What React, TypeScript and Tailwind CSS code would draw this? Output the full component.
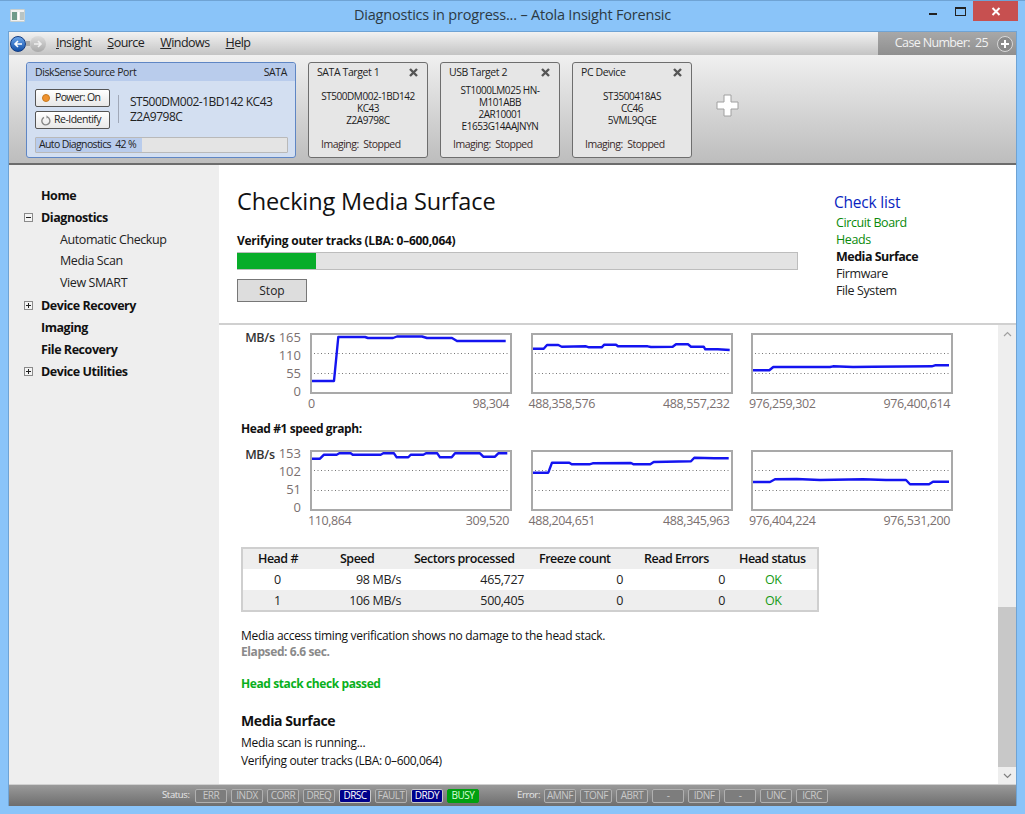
import React from "react";
const font = { fontFamily: '"Open Sans","Noto Sans",sans-serif' };

function Chart({ labels, pts }: { labels: [string, string]; pts: string }) {
  return (
    <div className="flex w-[202px] flex-col">
      <div className="relative h-[61px] w-[202px] border-2 border-[#a9a9a9] bg-white">
        <svg width="198" height="57" className="absolute left-0 top-0">
          <line x1="2" x2="198" y1="18.5" y2="18.5" stroke="#777" strokeDasharray="1 2.5" />
          <line x1="2" x2="198" y1="38.5" y2="38.5" stroke="#777" strokeDasharray="1 2.5" />
          <polyline points={pts} fill="none" stroke="#1414f0" strokeWidth="2.4" strokeLinejoin="round" />
        </svg>
      </div>
      <div className="-ml-[2px] mt-[1px] flex justify-between pr-[3px] text-[12.5px] leading-[17px] tracking-[-0.4px] text-[#7a7070]">
        <span>{labels[0]}</span>
        <span>{labels[1]}</span>
      </div>
    </div>
  );
}

function YAxis({ v, top, mb }: { v: string[]; top: string; mb: string }) {
  return (
    <div className={"flex w-[69px] shrink-0 justify-end " + top}>
      <div className={"mr-[4px] text-[12.5px] font-semibold leading-[17px] tracking-[-0.3px] text-[#333] " + mb}>MB/s</div>
      <div className="mr-[9px] flex flex-col text-right text-[13px] leading-[18px] text-[#7a7070]">
        {v.map((x) => <span key={x}>{x}</span>)}
      </div>
    </div>
  );
}

function Target({ title, lines, mt }: { title: string; lines: string[]; mt: string }) {
  return (
    <div className="flex h-[96px] w-[120px] flex-col rounded-[3px] border border-[#6e6e6e] bg-[#e6e6e6] px-2 text-[10.5px] leading-[12px] tracking-[-0.4px] text-[#1a1a1a]">
      <div className="mt-[3px] flex items-center justify-between pr-[1px]">
        <span className="text-[#222]">{title}</span>
        <svg width="9" height="9" viewBox="0 0 9 9"><path d="M1 1 8 8M8 1 1 8" stroke="#555" strokeWidth="2.4" /></svg>
      </div>
      <div className={"flex flex-col items-center whitespace-nowrap text-center text-[10px] tracking-[-0.45px] " + mt}>
        {lines.map((l) => <span key={l}>{l}</span>)}
      </div>
      <div className="mb-[7px] mt-auto pl-[4px] tracking-[-0.5px] text-[#3a2a2a]">Imaging:&nbsp; Stopped</div>
    </div>
  );
}

function NavTop({ t, icon }: { t: string; icon?: "plus" | "minus" }) {
  return (
    <div className="relative flex h-[22px] items-center pl-[32px] text-[12.5px] font-bold tracking-[-0.45px] text-[#111]">
      {icon && (
        <span className="absolute left-[15px] top-[6px] flex h-[9px] w-[9px] items-center justify-center border border-[#8a8a8a] bg-[#f4f4f4]">
          <span className="relative block h-[1px] w-[5px] bg-[#222]">
            {icon === "plus" && <span className="absolute left-[2px] top-[-2px] block h-[5px] w-[1px] bg-[#222]" />}
          </span>
        </span>
      )}
      {t}
    </div>
  );
}

function Pill({ t, v = "off" }: { t: string; v?: "off" | "blue" | "green" }) {
  const cls = v === "blue" ? "bg-[#00008b] text-white border-[#c8c8c8]" : v === "green" ? "bg-[#00a010] text-[#d8ffd8] border-[#00a010]" : "bg-[#7d7d7d] text-[#c9c9c9] border-[#b0b0b0]";
  return <span className={"flex h-[14px] w-[32px] shrink-0 items-center justify-center rounded-[2px] border text-[10px] tracking-[-0.5px] " + cls}>{t}</span>;
}

const cols = "grid-cols-[57px_102px_122px_99px_102px_1fr]";

export default function App() {
  return (
    <div style={font} className="flex h-[814px] w-[1025px] flex-col overflow-hidden border-t border-[#6fa3d4] bg-[#8ac4f9] text-[#111]">
      {/* title bar */}
      <div className="relative flex h-[30px] shrink-0 items-center justify-center pb-[2px] text-[14.5px] tracking-[-0.2px] text-[#2c3a44]">
        <div className="absolute left-[10px] top-[8px] flex h-[13px] w-[15px] items-center justify-center gap-[1px] rounded-[1px] border border-[#c8d0d0] bg-[#f0f0f0]">
          <span className="h-[8px] w-[5px] bg-[#6f9a8a]" />
          <span className="h-[8px] w-[1px] bg-white" />
          <span className="h-[8px] w-[4px] bg-[#b8c4c4]" />
        </div>
        <span>Diagnostics in progress... – Atola Insight Forensic</span>
        <div className="absolute right-[7px] top-0 flex h-[20px] items-start">
          <span className="mr-[18px] mt-[12px] h-[2px] w-[8px] bg-[#222]" />
          <span className="mr-[7px] mt-[6px] h-[9px] w-[11px] border border-t-2 border-[#222]" />
          <span className="flex h-[20px] w-[45px] items-center justify-center bg-[#c75050]">
            <svg width="10" height="9" viewBox="0 0 10 9"><path d="M1.5 1 8.5 8M8.5 1 1.5 8" stroke="#fff" strokeWidth="2" /></svg>
          </span>
        </div>
      </div>
      <div className="flex min-h-0 flex-1 flex-col px-[8px] pb-[8px]">
        <div className="flex h-full min-h-0 flex-col border-l border-r border-t border-[#6fa3d4]">
          {/* menu */}
          <div className="flex h-[23px] shrink-0 items-stretch bg-gradient-to-b from-[#f2f2f2] to-[#c4c4c4] text-[12.5px] tracking-[-0.55px] text-[#222]">
            <div className="flex flex-1 items-center">
              <div className="ml-[1px] flex items-center">
                <span className="z-10 flex h-[16px] w-[16px] items-center justify-center rounded-full border border-[#123a80] bg-gradient-to-b from-[#6aa5ea] to-[#0f4fa8]">
                  <svg width="10" height="10" viewBox="0 0 10 10"><path d="M9 5H2M5 2 2 5l3 3" fill="none" stroke="#fff" strokeWidth="1.6" /></svg>
                </span>
                <span className="h-[5px] w-[4px] bg-[#a9a9a9]" />
                <span className="flex h-[16px] w-[16px] items-center justify-center rounded-full bg-gradient-to-b from-[#ddd] to-[#a9a9a9]">
                  <svg width="10" height="10" viewBox="0 0 10 10"><path d="M1 5h7M5 2l3 3-3 3" fill="none" stroke="#f0f0f0" strokeWidth="1.6" /></svg>
                </span>
              </div>
              <div className="ml-[10px] flex gap-[16px]">
                <span><u>I</u>nsight</span>
                <span><u>S</u>ource</span>
                <span><u>W</u>indows</span>
                <span><u>H</u>elp</span>
              </div>
            </div>
            <div className="flex w-[138px] items-center justify-end gap-[9px] bg-gradient-to-b from-[#a8a8a8] to-[#8f8f8f] pr-[3px] text-[12.5px] tracking-[-0.65px] text-[#f2f2f2]">
              <span>Case Number:&nbsp; 25</span>
              <span className="flex h-[16px] w-[16px] items-center justify-center rounded-full border border-[#d8d8d8] bg-[#8a8a8a]">
                <svg width="10" height="10" viewBox="0 0 10 10"><path d="M5 1v8M1 5h8" stroke="#fff" strokeWidth="2" /></svg>
              </span>
            </div>
          </div>
          {/* tool strip */}
          <div className="flex h-[110px] shrink-0 items-start gap-[12px] border-b-2 border-[#6c6c6c] bg-gradient-to-b from-[#f0f0f0] to-[#bdbdbd] pl-[17px] pt-[7px]">
            <div className="flex h-[96px] w-[270px] flex-col rounded-[3px] border border-[#5f86c4] bg-[#d3dff1] text-[10.5px] tracking-[-0.4px] text-[#222]">
              <div className="flex h-[18px] shrink-0 items-center justify-between rounded-t-[3px] bg-[#b9ccec] pl-2 pr-[8px] pt-[2px]">
                <span>DiskSense Source Port</span>
                <span>SATA</span>
              </div>
              <div className="mt-[8px] flex items-center pl-2">
                <div className="flex flex-col gap-[4px]">
                  <div className="flex h-[18px] w-[75px] items-center rounded-[2px] border border-[#555] bg-gradient-to-b from-white to-[#e8e8e8] pl-[6px] tracking-[-0.65px] text-[#222]">
                    <span className="mr-[5px] h-[8px] w-[8px] rounded-full border border-[#c77a20] bg-[#f0922e]" />
                    Power: On
                  </div>
                  <div className="flex h-[18px] w-[75px] items-center rounded-[2px] border border-[#555] bg-gradient-to-b from-white to-[#e8e8e8] pl-[5px] tracking-[-0.5px] text-[#222]">
                    <svg className="mr-[3px]" width="10" height="11" viewBox="0 0 10 11"><path d="M6.5 2.2A4 4 0 1 1 3 2.3" fill="none" stroke="#888" strokeWidth="1.4" /><path d="M5.5 .3 7.5 2.3 5.5 3.6z" fill="#888" /></svg>
                    Re-Identify
                  </div>
                </div>
                <div className="ml-[8px] h-[28px] w-px bg-[#a0a8b8]" />
                <div className="ml-[11px] text-[12px] leading-[15px] tracking-[-0.5px] text-[#222]">
                  ST500DM002-1BD142 KC43<br />Z2A9798C
                </div>
              </div>
              <div className="ml-2 mt-[8px] flex h-[16px] w-[253px] overflow-hidden rounded-[1px] border border-[#b9b9b9] bg-[#e4e4e4]">
                <div className="flex h-full w-[106px] items-center whitespace-nowrap bg-[#b9ccec] pl-[3px] tracking-[-0.62px] text-[#222]">Auto Diagnostics&nbsp; 42 %</div>
              </div>
            </div>
            <Target title="SATA Target 1" lines={["ST500DM002-1BD142", "KC43", "Z2A9798C"]} mt="mt-[12px]" />
            <Target title="USB Target 2" lines={["ST1000LM025 HN-", "M101ABB", "2AR10001", "E1653G14AAJNYN"]} mt="mt-[6px]" />
            <Target title="PC Device" lines={["ST3500418AS", "CC46", "5VML9QGE"]} mt="mt-[12px]" />
            <svg className="ml-[11px] mt-[31px]" width="26" height="26" viewBox="0 0 26 26">
              <path d="M9 2h7v7h7v7h-7v7H9v-7H2V9h7z" fill="#fff" stroke="#a0a0a0" strokeWidth="1" />
            </svg>
          </div>
          {/* body */}
          <div className="flex min-h-0 flex-1">
            <div className="w-[210px] shrink-0 bg-[#eeeeee] pt-[20px]">
              <NavTop t="Home" />
              <NavTop t="Diagnostics" icon="minus" />
              <div className="pb-[1px] pl-[51px] text-[12.5px] font-normal tracking-[-0.4px] text-[#222]">
                <div className="flex h-[22px] items-center">Automatic Checkup</div>
                <div className="flex h-[21.5px] items-center">Media Scan</div>
                <div className="flex h-[21.5px] items-center">View SMART</div>
              </div>
              <NavTop t="Device Recovery" icon="plus" />
              <NavTop t="Imaging" />
              <NavTop t="File Recovery" />
              <NavTop t="Device Utilities" icon="plus" />
            </div>
            <div className="flex min-w-0 flex-1 flex-col bg-white">
              <div className="flex h-[160px] shrink-0 border-b-2 border-[#d0d0d0] pl-[18px]">
                <div className="w-[561px]">
                  <div className="mt-[20px] text-[23.5px] leading-[32px] tracking-[-0.13px] text-[#111]">Checking Media Surface</div>
                  <div className="mt-[15px] text-[12px] font-bold leading-[17px] tracking-[-0.27px] text-[#111]">Verifying outer tracks (LBA: 0–600,064)</div>
                  <div className="mt-[3px] flex h-[18px] w-[561px] border border-l-0 border-[#bdbdbd] bg-[#e3e3e3]">
                    <div className="h-full w-[79px] bg-[#08ad2a]" />
                  </div>
                  <div className="mt-[9px] flex h-[23px] w-[70px] items-center justify-center border border-[#777] bg-[#dddddd] text-[12px] text-[#222]">Stop</div>
                </div>
                <div className="ml-[38px] pt-[27px] text-[12.5px] tracking-[-0.4px]">
                  <div className="-ml-[2px] mb-[3px] text-[15.5px] leading-[20px] tracking-[-0.2px] text-[#0a1fc0]">Check list</div>
                  <div className="flex h-[17px] items-center text-[#0a8a0a]">Circuit Board</div>
                  <div className="flex h-[17px] items-center text-[#0a8a0a]">Heads</div>
                  <div className="flex h-[17px] items-center font-bold tracking-[-0.5px] text-[#111]">Media Surface</div>
                  <div className="flex h-[17px] items-center text-[#222]">Firmware</div>
                  <div className="flex h-[17px] items-center text-[#222]">File System</div>
                </div>
              </div>
              <div className="flex min-h-0 flex-1">
                <div className="min-w-0 flex-1 overflow-hidden">
                  <div className="flex pl-[22px] pt-[8px]">
                    <YAxis v={["165", "110", "55", "0"]} top="-mt-[5px]" mb="mt-[1px]" />
                    <div className="flex gap-[18.5px]">
                      <Chart labels={["0", "98,304"]} pts="0,46 22,46 26.3,2 53,2 56,3 81,3 85,1.5 110,1.5 115,3 140,3 145,6 193.7,6" />
                      <Chart labels={["488,358,576", "488,557,232"]} pts="0,13.7 10.7,13.7 14,10 25.3,10 28.7,11.7 53,11.3 56,12.3 68.7,12.3 71.3,9.7 83,9.7 85,11.3 114.7,11.3 118,12 139.7,11.7 143,9.3 155,9.3 158,11.7 170.7,11.7 172.3,14.3 184.7,14.3 196.7,15" />
                      <Chart labels={["976,259,302", "976,400,614"]} pts="0,35.3 16.3,35.3 20.3,32 77,32 80,31.3 100,32 120,31.7 178.7,31.3 182,30.3 196,30.3" />
                    </div>
                  </div>
                  <div className="mt-[8px] pl-[22px] text-[12px] font-bold leading-[17px] tracking-[-0.4px] text-[#111]">Head #1 speed graph:</div>
                  <div className="mt-[13px] flex pl-[22px]">
                    <YAxis v={["153", "102", "51", "0"]} top="-mt-[6px]" mb="mt-[2px]" />
                    <div className="flex gap-[18.5px]">
                      <Chart labels={["110,864", "309,520"]} pts="0,6.7 8,6.7 12,2.7 24.7,2.7 27.3,1.3 38.7,1.3 40.7,2.7 68.7,2.7 71.3,1.3 82,1.3 84.7,5.3 96.3,5.3 98.7,2.7 111.3,2.7 114,1.3 125.3,1.3 128,5.3 139.7,5.3 143,1.3 168,1.3 171.3,4.7 183,4.7 186.3,1.3 195.3,1.3" />
                      <Chart labels={["488,204,651", "488,345,963"]} pts="0,20.7 15.3,20.7 19,10.7 36.3,10.7 38.7,12.3 56.3,12.3 59.7,11.3 98,11 100.7,12.3 117.3,12.3 120.7,10 158,9.3 161.3,5.7 181.3,6.3 195.7,6.3" />
                      <Chart labels={["976,404,224", "976,531,200"]} pts="0,30 17,30 22,27.3 43.7,27 67,28 110,27.3 133,28 153,28 157,32.3 176,32.3 180,29.7 196,29.7" />
                    </div>
                  </div>
                  <div className="ml-[22px] mt-[18px] w-[578px] border-2 border-[#cfcfcf] text-[12.5px] tracking-[-0.35px] text-[#222]">
                    <div className={"grid h-[20px] items-center bg-[#eeeeee] font-semibold tracking-[-0.5px] text-[#111] " + cols}>
                      <span className="whitespace-nowrap pl-[15px]">Head #</span>
                      <span className="pl-[40px]">Speed</span>
                      <span className="whitespace-nowrap pl-[12px]">Sectors processed</span>
                      <span className="whitespace-nowrap pl-[15px]">Freeze count</span>
                      <span className="whitespace-nowrap pl-[21px]">Read Errors</span>
                      <span className="whitespace-nowrap pl-[14px]">Head status</span>
                    </div>
                    {[["0", "98 MB/s", "465,727"], ["1", "106 MB/s", "500,405"]].map((r, i) => (
                      <div key={r[0]} className={"grid items-center pt-[2px] " + cols + " " + (i ? "h-[20px] bg-[#eeeeee]" : "h-[21px] bg-white")}>
                        <span className="pl-[31px]">{r[0]}</span>
                        <span className="pr-[1px] text-right">{r[1]}</span>
                        <span className="text-right">{r[2]}</span>
                        <span className="text-right">0</span>
                        <span className="text-right">0</span>
                        <span className="pl-[40px] text-[#169a16]">OK</span>
                      </div>
                    ))}
                  </div>
                  <div className="ml-[22px] mt-[16px] text-[12px] leading-[16px] tracking-[-0.3px] text-[#111]">Media access timing verification shows no damage to the head stack.</div>
                  <div className="ml-[22px] text-[12px] font-bold leading-[16px] tracking-[-0.4px] text-[#8a8a8a]">Elapsed: 6.6 sec.</div>
                  <div className="ml-[22px] mt-[16px] text-[12px] font-bold leading-[16px] tracking-[-0.4px] text-[#08b01c]">Head stack check passed</div>
                  <div className="ml-[22px] mt-[19px] text-[14px] font-bold leading-[20px] tracking-[-0.4px] text-[#111]">Media Surface</div>
                  <div className="ml-[22px] mt-[3px] text-[12px] leading-[18px] tracking-[-0.3px] text-[#111]">Media scan is running...</div>
                  <div className="ml-[22px] text-[12px] leading-[18px] tracking-[-0.35px] text-[#111]">Verifying outer tracks (LBA: 0–600,064)</div>
                </div>
                <div className="flex w-[18px] shrink-0 flex-col bg-[#eeeeee]">
                  <div className="flex h-[17px] items-center justify-center">
                    <svg width="9" height="6" viewBox="0 0 9 6"><path d="M1 5 4.5 1.5 8 5" fill="none" stroke="#a0a0a0" strokeWidth="1.2" /></svg>
                  </div>
                  <div className="mt-[265px] h-[160px] bg-[#c8c8c8]" />
                  <div className="flex flex-1 items-center justify-center">
                    <svg width="9" height="6" viewBox="0 0 9 6"><path d="M1 1 4.5 4.5 8 1" fill="none" stroke="#808080" strokeWidth="1.2" /></svg>
                  </div>
                </div>
              </div>
            </div>
          </div>
          {/* status */}
          <div className="flex h-[22px] shrink-0 items-center gap-[4px] border-t border-[#d0d0d0] bg-gradient-to-b from-[#9a9a9a] to-[#6e6e6e] pl-[153px] text-[9.5px] tracking-[-0.35px] text-[#e8e8e8]">
            <span className="w-[29px]">Status:</span>
            <Pill t="ERR" /><Pill t="INDX" /><Pill t="CORR" /><Pill t="DREQ" /><Pill t="DRSC" v="blue" /><Pill t="FAULT" /><Pill t="DRDY" v="blue" /><Pill t="BUSY" v="green" />
            <span className="ml-[34px] w-[23px]">Error:</span>
            <Pill t="AMNF" /><Pill t="TONF" /><Pill t="ABRT" /><Pill t="-" /><Pill t="IDNF" /><Pill t="-" /><Pill t="UNC" /><Pill t="ICRC" />
          </div>
        </div>
      </div>
    </div>
  );
}
